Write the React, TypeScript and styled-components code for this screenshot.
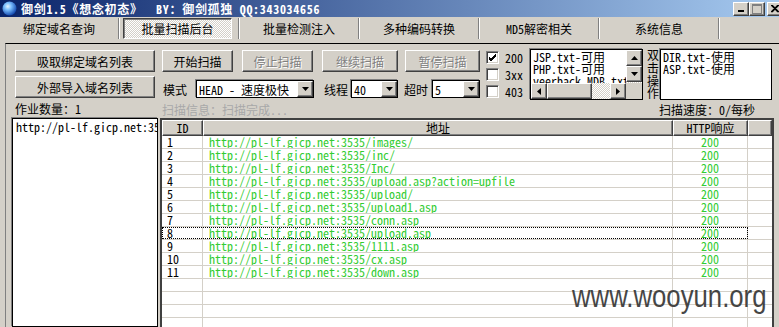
import React from 'react'
import styled, { createGlobalStyle, css } from 'styled-components'

const HOST = 'http://pl-lf.gicp.net:3535/'
const paths = [
  'images/',
  'inc/',
  'Inc/',
  'upload.asp?action=upfile',
  'upload/',
  'upload1.asp',
  'conn.asp',
  'upload.asp',
  '1111.asp',
  'cx.asp',
  'down.asp',
]
const tabs = ['绑定域名查询', '批量扫描后台', '批量检测注入', '多种编码转换', 'MD5解密相关', '系统信息']

const GlobalStyle = createGlobalStyle`
  html, body { margin: 0; padding: 0; background: #d4d0c8; overflow: hidden; }
  body {
    font-family: "Noto Sans Mono CJK SC", "Noto Sans CJK SC", sans-serif;
    font-size: 12px;
    color: #000;
  }
  * { box-sizing: border-box; }
`

const raised = css`
  background: #d4d0c8;
  border: 1px solid;
  border-color: #fff #404040 #404040 #fff;
  box-shadow: inset -1px -1px 0 #808080;
`

const field = css`
  background: #fff;
  border: 1px solid #000;
  box-shadow: -1px -1px 0 #808080;
`

const App = () => {
  return (
    <Window>
      <GlobalStyle />
      <TitleBar>
        <Globe />
        <TitleText>{'御剑1.5《想念初态》  BY：御剑孤独 QQ:343034656'}</TitleText>
        <CaptionButtons>
          <CaptionBtn>
            <svg width="8" height="8" viewBox="0 0 8 8"><rect x="1" y="5" width="6" height="2" fill="#000" /></svg>
          </CaptionBtn>
          <CaptionBtn>
            <svg width="10" height="10" viewBox="0 0 10 10">
              <rect x="0.5" y="0.5" width="9" height="9" fill="none" stroke="#808080" />
              <rect x="1" y="1" width="8" height="1" fill="#808080" />
            </svg>
          </CaptionBtn>
          <CaptionBtn $ml={2}>
            <svg width="9" height="8" viewBox="0 0 9 8">
              <path d="M1 0 L8 7 M0 0 L7 7 M8 0 L1 7 M7 0 L0 7" stroke="#000" strokeWidth="1.2" />
            </svg>
          </CaptionBtn>
        </CaptionButtons>
      </TitleBar>

      <TabStrip>
        {tabs.map((t, i) => (
          <React.Fragment key={t}>
            <Tab>
              <TabFace $active={i === 1}>{t}</TabFace>
            </Tab>
            <TabSep />
          </React.Fragment>
        ))}
      </TabStrip>

      <Panel>
        <LeftCol>
          <Btn $w={140} $ml={3}>吸取绑定域名列表</Btn>
          <Btn $w={140} $ml={3} $mt={4}>外部导入域名列表</Btn>
          <CountLabel>作业数量：1</CountLabel>
          <DomainList>
            <Mono>{HOST}</Mono>
          </DomainList>
        </LeftCol>

        <RightCol>
          <TopBlock>
            <ScanControls>
              <ButtonRow>
                <Btn $w={71}>开始扫描</Btn>
                <Btn $w={71} $ml={9} $off>停止扫描</Btn>
                <Btn $w={76} $ml={9} $off>继续扫描</Btn>
                <Btn $w={75} $ml={7} $off>暂停扫描</Btn>
              </ButtonRow>
              <SelectRow>
                <FieldLabel $w={33} $ml={1}>模式</FieldLabel>
                <Select $w={118}>
                  <SelectText>HEAD - 速度极快</SelectText>
                  <DropBtn><DownArrow /></DropBtn>
                </Select>
                <FieldLabel $w={27} $ml={10}>线程</FieldLabel>
                <Select $w={47}>
                  <SelectText>40</SelectText>
                  <DropBtn><DownArrow /></DropBtn>
                </Select>
                <FieldLabel $w={28} $ml={6}>超时</FieldLabel>
                <Select $w={48}>
                  <SelectText>5</SelectText>
                  <DropBtn><DownArrow /></DropBtn>
                </Select>
              </SelectRow>
            </ScanControls>

            <Checks>
              {[['200', true], ['3xx', false], ['403', false]].map(([l, on]) => (
                <CheckRow key={l as string}>
                  <CheckBox>
                    {on && (
                      <svg width="9" height="9" viewBox="0 0 9 9">
                        <path d="M1 4 L3 6 L8 1 M1 5 L3 7 L8 2 M1 6 L3 8 L8 3" stroke="#000" strokeWidth="1" fill="none" />
                      </svg>
                    )}
                  </CheckBox>
                  <CheckText>{l as string}</CheckText>
                </CheckRow>
              ))}
            </Checks>

            <ScrollList>
              <ListLines>
                <ListLine>JSP.txt-可用</ListLine>
                <ListLine>PHP.txt-可用</ListLine>
                <ListLine>veerback MDB.txt</ListLine>
              </ListLines>
              <VScroll>
                <ScrollBtn><UpArrow /></ScrollBtn>
                <ScrollBtn><DownArrow /></ScrollBtn>
              </VScroll>
              <HScroll>
                <ScrollBtn><LeftArrow /></ScrollBtn>
                <Thumb />
                <Track />
                <ScrollBtn><RightArrow /></ScrollBtn>
              </HScroll>
              <Corner />
            </ScrollList>

            <VText>双击操作</VText>

            <PlainList>
              <ListLine>DIR.txt-使用</ListLine>
              <ListLine>ASP.txt-使用</ListLine>
            </PlainList>
          </TopBlock>

          <InfoRow>
            <InfoText>扫描信息：扫描完成...</InfoText>
            <SpeedText>扫描速度：0/每秒</SpeedText>
          </InfoRow>

          <TableFrame>
            <HeadRow>
              <HeadCell $w={41}>ID</HeadCell>
              <HeadCell $w={470}>地址</HeadCell>
              <HeadCell $w={75}>HTTP响应</HeadCell>
              <HeadCell />
            </HeadRow>
            {paths.map((p, i) => (
              <Row key={i}>
                <RowMain $focus={i === 7}>
                  <IdCell>{i + 1}</IdCell>
                  <UrlCell>{HOST + p}</UrlCell>
                  <CodeCell>200</CodeCell>
                </RowMain>
                <FillCell />
              </Row>
            ))}
            {[0, 1, 2, 3].map(i => (
              <Row key={'e' + i}>
                <RowMain>
                  <IdCell />
                  <UrlCell />
                  <CodeCell />
                </RowMain>
                <FillCell />
              </Row>
            ))}
          </TableFrame>
        </RightCol>
      </Panel>

      <Watermark>www.wooyun.org</Watermark>
    </Window>
  )
}

export default App

const Globe = () => (
  <svg width="15" height="15" viewBox="0 0 15 15">
    <defs>
      <radialGradient id="gl" cx="0.38" cy="0.35" r="0.7">
        <stop offset="0" stopColor="#e8f6ff" />
        <stop offset="0.35" stopColor="#7cc0ff" />
        <stop offset="1" stopColor="#0a3fa8" />
      </radialGradient>
    </defs>
    <circle cx="7.5" cy="7.5" r="7" fill="url(#gl)" />
  </svg>
)

const DownArrow = () => (
  <svg width="7" height="4" viewBox="0 0 7 4"><path d="M0 0 H7 L3.5 4 Z" fill="#000" /></svg>
)
const UpArrow = () => (
  <svg width="7" height="4" viewBox="0 0 7 4"><path d="M0 4 H7 L3.5 0 Z" fill="#000" /></svg>
)
const LeftArrow = () => (
  <svg width="4" height="7" viewBox="0 0 4 7"><path d="M4 0 V7 L0 3.5 Z" fill="#000" /></svg>
)
const RightArrow = () => (
  <svg width="4" height="7" viewBox="0 0 4 7"><path d="M0 0 V7 L4 3.5 Z" fill="#000" /></svg>
)

const Watermark = styled.div`
  position: absolute;
  left: 572px;
  top: 279px;
  font-family: "Liberation Sans", sans-serif;
  font-size: 31px;
  color: #333;
  opacity: 0.9;
  transform: scaleX(0.83);
  transform-origin: left top;
  white-space: nowrap;
  pointer-events: none;
`

const FillCell = styled.div`
  flex: 1;
`

const CodeCell = styled.div`
  width: 75px;
  border-right: 1px solid #d4d0c8;
  text-align: center;
  color: #33cc33;
  line-height: 12px;
`

const UrlCell = styled.div`
  width: 470px;
  border-right: 1px solid #d4d0c8;
  padding-left: 6px;
  color: #33cc33;
  line-height: 12px;
  white-space: nowrap;
  overflow: hidden;
`

const IdCell = styled.div`
  width: 41px;
  border-right: 1px solid #d4d0c8;
  padding-left: 5px;
  line-height: 12px;
`

const RowMain = styled.div<{ $focus?: boolean }>`
  display: flex;
  outline: ${p => (p.$focus ? '1px dotted #000' : 'none')};
  outline-offset: -1px;
`

const Row = styled.div`
  display: flex;
  height: 13px;
  flex: none;
  border-bottom: 1px solid #d4d0c8;
`

const HeadCell = styled.div<{ $w?: number }>`
  ${raised};
  width: ${p => (p.$w ? p.$w + 'px' : 'auto')};
  flex: ${p => (p.$w ? 'none' : 1)};
  display: flex;
  align-items: center;
  justify-content: center;
  line-height: 12px;
`

const HeadRow = styled.div`
  display: flex;
  height: 16px;
  flex: none;
`

const TableFrame = styled.div`
  flex: 1;
  display: flex;
  flex-direction: column;
  background: #fff;
  border-style: solid;
  border-width: 2px 2px 0 2px;
  border-color: #404040;
  overflow: hidden;
`

const SpeedText = styled.span`
  margin-left: auto;
  width: 115px;
`

const InfoText = styled.span`
  margin-left: 2px;
  color: #a8a8a8;
`

const InfoRow = styled.div`
  display: flex;
  align-items: center;
  height: 17px;
  flex: none;
`

const PlainList = styled.div`
  ${field};
  width: 112px;
  height: 51px;
  padding: 1px 2px;
`

const VText = styled.div`
  width: 17px;
  padding-left: 4px;
  line-height: 12.75px;
  word-break: break-all;
`

const Corner = styled.div`
  background: #d4d0c8;
`

const Track = styled.div`
  width: 18px;
  background: repeating-conic-gradient(#fff 0 25%, #d4d0c8 0 50%) 0 0 / 2px 2px;
`

const Thumb = styled.div`
  ${raised};
  width: 45px;
`

const ScrollBtn = styled.div`
  ${raised};
  width: 16px;
  height: 16px;
  display: flex;
  align-items: center;
  justify-content: center;
`

const HScroll = styled.div`
  display: flex;
`

const VScroll = styled.div`
  display: flex;
  flex-direction: column;
  background: repeating-conic-gradient(#fff 0 25%, #d4d0c8 0 50%) 0 0 / 2px 2px;
`

const ListLine = styled.div`
  line-height: 12px;
  white-space: nowrap;
`

const ListLines = styled.div`
  padding: 1px 0 0 2px;
  overflow: hidden;
`

const ScrollList = styled.div`
  ${field};
  width: 113px;
  height: 51px;
  display: grid;
  grid-template-columns: 1fr 16px;
  grid-template-rows: 1fr 16px;
  overflow: hidden;
`

const CheckText = styled.span`
  margin-left: 6px;
`

const CheckBox = styled.div`
  width: 13px;
  height: 13px;
  background: #fff;
  border: 1px solid;
  border-color: #808080 #fff #fff #808080;
  box-shadow: inset 1px 1px 0 #404040, inset -1px -1px 0 #d4d0c8;
  display: flex;
  align-items: center;
  justify-content: center;
`

const CheckRow = styled.div`
  display: flex;
  align-items: center;
  height: 17px;
`

const Checks = styled.div`
  margin-left: 6px;
  width: 44px;
  display: flex;
  flex-direction: column;
`

const DropBtn = styled.div`
  ${raised};
  width: 16px;
  height: 16px;
  display: flex;
  align-items: center;
  justify-content: center;
`

const SelectText = styled.span`
  flex: 1;
  padding-left: 2px;
  white-space: nowrap;
  overflow: hidden;
`

const Select = styled.div<{ $w: number }>`
  ${field};
  width: ${p => p.$w}px;
  height: 18px;
  display: flex;
  align-items: center;
`

const FieldLabel = styled.span<{ $w: number; $ml?: number }>`
  width: ${p => p.$w}px;
  margin-left: ${p => p.$ml ?? 0}px;
`

const SelectRow = styled.div`
  display: flex;
  align-items: center;
  height: 18px;
`

const ButtonRow = styled.div`
  display: flex;
  height: 22px;
`

const ScanControls = styled.div`
  margin-left: 2px;
  width: 318px;
  display: flex;
  flex-direction: column;
  gap: 8px;
  padding-top: 1px;
`

const TopBlock = styled.div`
  display: flex;
  margin-top: 5px;
  height: 52px;
  flex: none;
`

const RightCol = styled.div`
  flex: 1;
  min-width: 0;
  margin-left: 2px;
  padding-right: 5px;
  display: flex;
  flex-direction: column;
`

const Mono = styled.span`
  white-space: nowrap;
`

const DomainList = styled.div`
  ${field};
  flex: 1;
  padding: 2px 3px;
  overflow: hidden;
  line-height: 12px;
`

const CountLabel = styled.div`
  height: 20px;
  display: flex;
  align-items: center;
  padding-left: 3px;
`

const Btn = styled.button<{ $w: number; $ml?: number; $mt?: number; $off?: boolean }>`
  ${raised};
  width: ${p => p.$w}px;
  height: 22px;
  flex: none;
  margin: ${p => p.$mt ?? 0}px 0 0 ${p => p.$ml ?? 0}px;
  padding: 0;
  font: inherit;
  color: ${p => (p.$off ? '#808080' : '#000')};
  text-shadow: ${p => (p.$off ? '1px 1px 0 #fff' : 'none')};
`

const LeftCol = styled.div`
  margin-left: 6px;
  width: 146px;
  display: flex;
  flex-direction: column;
  padding-top: 6px;
`

const Panel = styled.div`
  flex: 1;
  min-height: 0;
  display: flex;
  margin-left: 5px;
  border-top: 1px solid #000;
  border-left: 1px solid #808080;
`

const TabSep = styled.div`
  width: 2px;
  height: 21px;
  border-left: 1px solid #808080;
  border-right: 1px solid #fff;
`

const TabFace = styled.div<{ $active?: boolean }>`
  height: 21px;
  display: flex;
  align-items: center;
  justify-content: center;
  ${p =>
    p.$active
      ? css`
          margin: 0 6px 0 3px;
          width: 109px;
          border: 1px solid;
          border-color: #404040 #fff #fff #404040;
          box-shadow: inset 1px 1px 0 #808080;
          background: repeating-conic-gradient(#fff 0 25%, #d4d0c8 0 50%) 0 0 / 2px 2px;
        `
      : css`
          width: 118px;
        `}
`

const Tab = styled.div`
  width: 118px;
  display: flex;
`

const TabStrip = styled.div`
  height: 26px;
  flex: none;
  display: flex;
  align-items: flex-start;
  padding-top: 1px;
`

const CaptionBtn = styled.div<{ $ml?: number }>`
  ${raised};
  width: 16px;
  height: 14px;
  margin-left: ${p => p.$ml ?? 0}px;
  display: flex;
  align-items: center;
  justify-content: center;
`

const CaptionButtons = styled.div`
  margin-left: auto;
  margin-right: -4px;
  display: flex;
`

const TitleText = styled.span`
  margin-left: 4px;
  white-space: pre;
  letter-spacing: 0.7px;
`

const TitleBar = styled.div`
  height: 17px;
  flex: none;
  display: flex;
  align-items: center;
  padding-left: 2px;
  background: linear-gradient(to right, #0a246a, #a6caf0);
  color: #fff;
  font-weight: bold;
`

const Window = styled.div`
  position: relative;
  width: 779px;
  height: 327px;
  display: flex;
  flex-direction: column;
  overflow: hidden;
  background: #d4d0c8;
`
